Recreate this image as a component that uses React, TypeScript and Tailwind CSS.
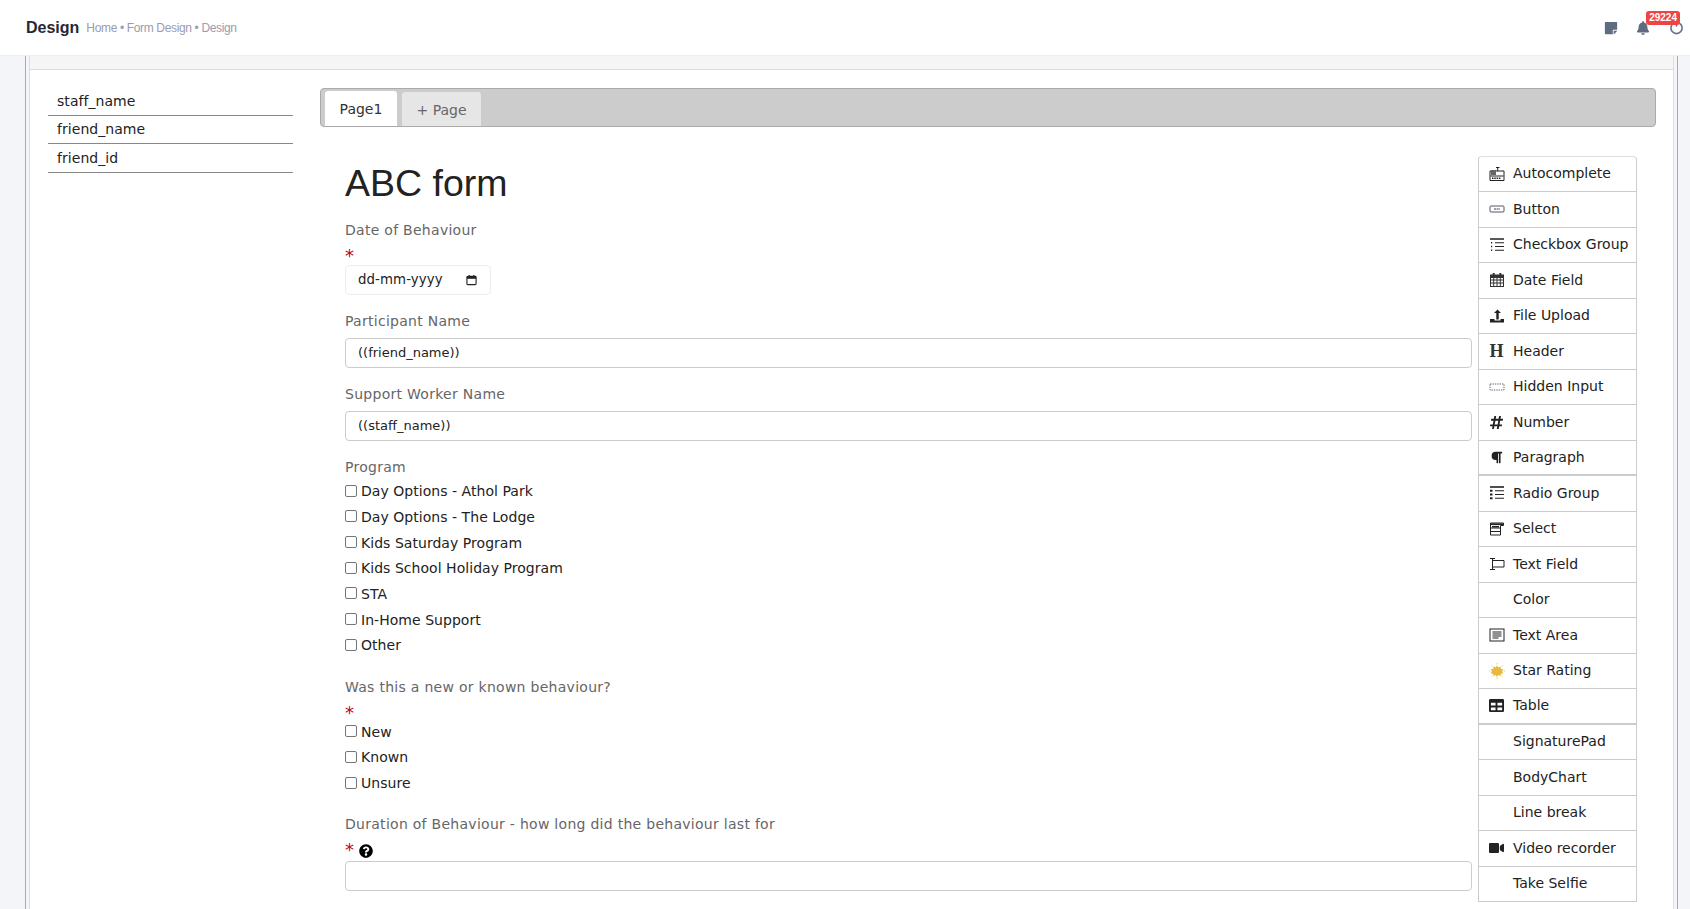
import React from "react";
import { FaBell, FaHashtag, FaParagraph, FaQuestionCircle, FaTable, FaVideo, FaStickyNote } from "react-icons/fa";

const BODY = "font-['DejaVu_Sans',sans-serif]";

const IconAuto = () => (
  <svg viewBox="0 0 16 16" className="h-4 w-4" fill="none" stroke="#222" strokeWidth="1">
    <path d="M1 5h14v9.500H1z" />
    <path d="M1.500 10h13" />
    <path d="M7 1.500h3.500M8.700 1.500V5" />
    <rect x="2" y="4" width="5" height="5" fill="#666" stroke="none" />
    <path d="M3 12.300h9" strokeWidth="1.500" strokeDasharray="1.500 .8" />
  </svg>
);

const IconButton = () => (
  <svg viewBox="0 0 16 16" className="h-4 w-4" fill="none" stroke="#556">
    <rect x="1" y="5" width="14" height="6" rx="1" />
    <path d="M5 8h6" stroke="#99a" strokeWidth="2" strokeDasharray="2 .6" />
  </svg>
);

const IconList = ({ dots }: { dots?: boolean }) => (
  <svg viewBox="0 0 16 16" className="h-4 w-4" stroke="#222" strokeWidth="1.100" fill="none">
    <path d="M1 2h14" strokeWidth="1.600" />
    <path d="M6 5.700h9M6 9.500h9M6 13.300h9" />
    {dots ? (
      <path d="M1 5.700h3M1 9.500h3M1 13.300h3" strokeWidth="2" strokeDasharray="2.500 .5" />
    ) : (
      <path d="M2 5.700h2M2 9.500h2M2 13.300h2" strokeWidth="1.400" strokeDasharray="1 .8" />
    )}
  </svg>
);

const IconCalendar = () => (
  <svg viewBox="0 0 16 16" className="h-4 w-4" fill="none" stroke="#333" strokeWidth="1">
    <rect x="1.500" y="3" width="13" height="11.500" />
    <path d="M1.500 4.500h13" strokeWidth="3" />
    <path d="M1.500 8h13M1.500 11h13M4.700 6v8M8 6v8M11.300 6v8" />
    <path d="M4.700 1v3M11.300 1v3" strokeWidth="2" />
  </svg>
);

const IconNativeDate = () => (
  <svg viewBox="0 0 12 12" className="h-[12px] w-[11px]" fill="none" stroke="#222" strokeWidth="1.200">
    <rect x="1" y="2" width="10" height="9" rx="1" />
    <path d="M1 3.500h10" strokeWidth="2.400" />
    <path d="M3.500 .5v2M8.500 .5v2" />
  </svg>
);

const IconUpload = () => (
  <svg viewBox="0 0 16 16" className="h-4 w-4" fill="#222">
    <path d="M8.500 1.500l3.500 3.500H9.700v6.500H7.300V5H5z" />
    <path d="M1 11h4.500v1.500h6V11H15v3.500H1z" />
  </svg>
);

const IconHidden = () => (
  <svg viewBox="0 0 16 16" className="h-4 w-4" fill="none" stroke="#667" strokeDasharray="1.400 1">
    <rect x="1" y="5" width="14" height="6" />
  </svg>
);

const IconSelect = () => (
  <svg viewBox="0 0 16 16" className="h-4 w-4" fill="none" stroke="#222">
    <path d="M1.500 2h13v2.500h-3V14h-10z" />
    <path d="M1.500 7h10M1.500 10.500h10" />
    <path d="M1.500 3.200h13" strokeWidth="1.600" />
    <path d="M3 5.700h7" strokeWidth="1.600" />
  </svg>
);

const IconText = () => (
  <svg viewBox="0 0 16 16" className="h-4 w-4" fill="none" stroke="#222">
    <path d="M3.500 4.500H15v6.500H3.500" />
    <path d="M1 2.500h5M1 13.500h5M3.500 2.500v11" />
  </svg>
);

const IconArea = () => (
  <svg viewBox="0 0 16 16" className="h-4 w-4" fill="none" stroke="#222">
    <rect x="1" y="2" width="14" height="12" />
    <path d="M3.500 5h9M3.500 7h9M3.500 9h9M3.500 11h6" />
  </svg>
);

const IconStar = () => (
  <svg viewBox="0 0 16 16" className="h-4 w-4">
    <path
      d="M8 2.500l1.300 2 2.300-1 .2 2.400 2.400.2-1 2.200 1 2.200-2.400.2-.2 2.400-2.300-1-1.300 2-1.300-2-2.300 1-.2-2.400-2.400-.2 1-2.200-1-2.200 2.400-.2.2-2.400 2.300 1z"
      fill="#e8b93a"
    />
    <path d="M8 0v1.500M8 14.500V16M0 8h1.500M14.500 8H16M2.500 2.500l1 1M12.500 12.500l1 1M2.500 13.500l1-1M12.500 3.500l1-1" stroke="#eecb70" />
  </svg>
);

const IconPower = () => (
  <svg viewBox="0 0 16 16" className="h-[15px] w-[15px]" fill="none" stroke="#64748b" strokeWidth="1.700">
    <path d="M5 3.300a6 6 0 1 0 6 0" />
    <path d="M8 1v6" />
  </svg>
);

const tools: { label: string; icon?: React.ReactNode; thick?: boolean }[] = [
  { label: "Autocomplete", icon: <IconAuto /> },
  { label: "Button", icon: <IconButton /> },
  { label: "Checkbox Group", icon: <IconList /> },
  { label: "Date Field", icon: <IconCalendar /> },
  { label: "File Upload", icon: <IconUpload /> },
  { label: "Header", icon: <span className="font-['Liberation_Serif',serif] text-[18px] font-bold leading-none text-[#333]">H</span> },
  { label: "Hidden Input", icon: <IconHidden /> },
  { label: "Number", icon: <FaHashtag className="h-[15px] w-[15px] text-[#222]" /> },
  { label: "Paragraph", icon: <FaParagraph className="h-[13px] w-[13px] text-[#222]" />, thick: true },
  { label: "Radio Group", icon: <IconList dots /> },
  { label: "Select", icon: <IconSelect /> },
  { label: "Text Field", icon: <IconText /> },
  { label: "Color" },
  { label: "Text Area", icon: <IconArea /> },
  { label: "Star Rating", icon: <IconStar /> },
  { label: "Table", icon: <FaTable className="h-[15px] w-[15px] text-[#222]" />, thick: true },
  { label: "SignaturePad" },
  { label: "BodyChart" },
  { label: "Line break" },
  { label: "Video recorder", icon: <FaVideo className="h-[14px] w-[15px] text-[#222]" /> },
  { label: "Take Selfie" },
];

const Label = ({ children }: { children: React.ReactNode }) => (
  <div className="text-[14px] leading-[21px] tracking-[0.28px] text-[#666]">{children}</div>
);

const Required = ({ help }: { help?: boolean }) => (
  <div className="flex h-[21px] items-center gap-[5px] text-[18px] leading-none text-[#c00020]">
    <span className="mt-[9px]">*</span>
    {help && <FaQuestionCircle className="mt-[11px] h-[14px] w-[14px] text-black" />}
  </div>
);

const Check = ({ label }: { label: string }) => (
  <div className="flex h-[25.650px] items-center gap-[4px] text-[14px] tracking-[0.04px] text-[#222]">
    <span className="-mt-[2px] h-[12px] w-[12px] rounded-[2px] border border-[#767676] bg-white" />
    <span>{label}</span>
  </div>
);

const TextBox = ({ value }: { value?: string }) => (
  <div className="flex h-[30px] items-center rounded-[4px] border border-[#ccc] px-3 text-[13px] text-[#222]">
    {value}
  </div>
);

export default function App() {
  return (
    <div className={`flex h-screen flex-col overflow-hidden bg-[#f3f5f9] ${BODY}`}>
      <header className="flex h-[56px] shrink-0 items-center justify-between border-b border-[#eceef0] bg-white pl-[26px] pr-[6px]">
        <div className="flex items-center gap-[7px] font-['Liberation_Sans',sans-serif]">
          <span className="text-[16px] font-bold text-[#1f2937]">Design</span>
          <span className="text-[12px] tracking-[-0.35px] text-[#9a9cb0]">Home • Form Design • Design</span>
        </div>
        <div className="relative flex items-center">
          <FaStickyNote className="mr-[18px] h-[14px] w-[14px] text-[#5f6b7f]" />
          <FaBell className="mr-[19px] h-[14px] w-[14px] text-[#5f6b7f]" />
          <IconPower />
          <span className="absolute right-[4px] top-[-9px] rounded-[3px] bg-[#ef4444] px-[3px] font-['Liberation_Sans',sans-serif] text-[10px] font-bold leading-[14px] text-white">
            29224
          </span>
        </div>
      </header>

      <div className="ml-[25px] mr-[12px] flex min-h-0 flex-1 flex-col border-x border-[#aaa] pl-[3px] pr-[3px]">
        <div className="flex min-h-0 flex-1 flex-col border-x border-[#ddd] bg-white">
          <div className="h-[14px] shrink-0 border-b border-[#ddd] bg-[#f5f5f5]" />
          <div className="flex min-h-0 flex-1 pl-[18px] pr-[17px] pt-[18px]">
            <aside className="-mt-[1px] w-[245px] shrink-0 text-[14px] tracking-[0.05px] text-[#222]">
              {["staff_name", "friend_name", "friend_id"].map((name) => (
                <div key={name} className="flex h-[28.500px] items-center border-b border-[#888] pl-[9px] pt-[1px]">
                  {name}
                </div>
              ))}
            </aside>

            <main className="ml-[27px] min-w-0 flex-1">
              <div className="flex h-[39px] items-end gap-[5px] rounded-[4px] border border-[#aaa] bg-[#ccc] pl-[4px] text-[14px]">
                <div className="flex h-[35px] w-[72px] items-center justify-center rounded-t-[3px] bg-white pt-[2px] text-[#333]">Page1</div>
                <div className="flex h-[34px] w-[79px] items-center justify-center rounded-t-[3px] bg-[#e6e6e6] pt-[2px] text-[#666]">+ Page</div>
              </div>

              <div className="flex gap-[6px] pl-[25px] pr-[19px] pt-[30px]">
                <div className="min-w-0 flex-1">
                  <h1 className="mb-[13px] mt-[2px] font-['Liberation_Sans',sans-serif] text-[37.500px] font-normal leading-[48px] text-[#222]">ABC form</h1>

                  <Label>Date of Behaviour</Label>
                  <Required />
                  <div className="mt-[3px] flex h-[30px] w-[146px] items-center justify-between rounded-[4px] border border-[#e9edf2] pl-[12px] pr-[13px] text-[13.330px] tracking-[0.1px] text-[#222]">
                    <span>dd-mm-yyyy</span>
                    <IconNativeDate />
                  </div>

                  <div className="mt-[16px]">
                    <Label>Participant Name</Label>
                  </div>
                  <div className="mt-[6px]">
                    <TextBox value="((friend_name))" />
                  </div>

                  <div className="mt-[16px]">
                    <Label>Support Worker Name</Label>
                  </div>
                  <div className="mt-[6px]">
                    <TextBox value="((staff_name))" />
                  </div>

                  <div className="mt-[16px]">
                    <Label>Program</Label>
                  </div>
                  <div className="mt-[1px]">
                    {["Day Options - Athol Park", "Day Options - The Lodge", "Kids Saturday Program", "Kids School Holiday Program", "STA", "In-Home Support", "Other"].map((c) => (
                      <Check key={c} label={c} />
                    ))}
                  </div>

                  <div className="mt-[19px]">
                    <Label>Was this a new or known behaviour?</Label>
                  </div>
                  <Required />
                  {["New", "Known", "Unsure"].map((c) => (
                    <Check key={c} label={c} />
                  ))}

                  <div className="mt-[18px]">
                    <Label>Duration of Behaviour - how long did the behaviour last for</Label>
                  </div>
                  <Required help />
                  <div className="mt-[5px]">
                    <TextBox />
                  </div>
                </div>

                <ul className="-mt-[1.500px] w-[159px] shrink-0 self-start overflow-hidden rounded-t-[4px] border border-x-[#ccc] border-b-[#ccc] border-t-[#ddd] text-[14px] text-[#222]">
                  {tools.map((t, i) => (
                    <li
                      key={t.label}
                      className={`flex items-center ${i === tools.length - 1 ? "h-[34px]" : t.thick ? "h-[35.500px] border-b-2 border-[#ccc]" : "h-[35.500px] border-b border-[#ccc]"}`}
                    >
                      <span className="flex w-[34px] shrink-0 items-center justify-center pl-[1px]">{t.icon}</span>
                      <span className="whitespace-nowrap">{t.label}</span>
                    </li>
                  ))}
                </ul>
              </div>
            </main>
          </div>
        </div>
      </div>
    </div>
  );
}
